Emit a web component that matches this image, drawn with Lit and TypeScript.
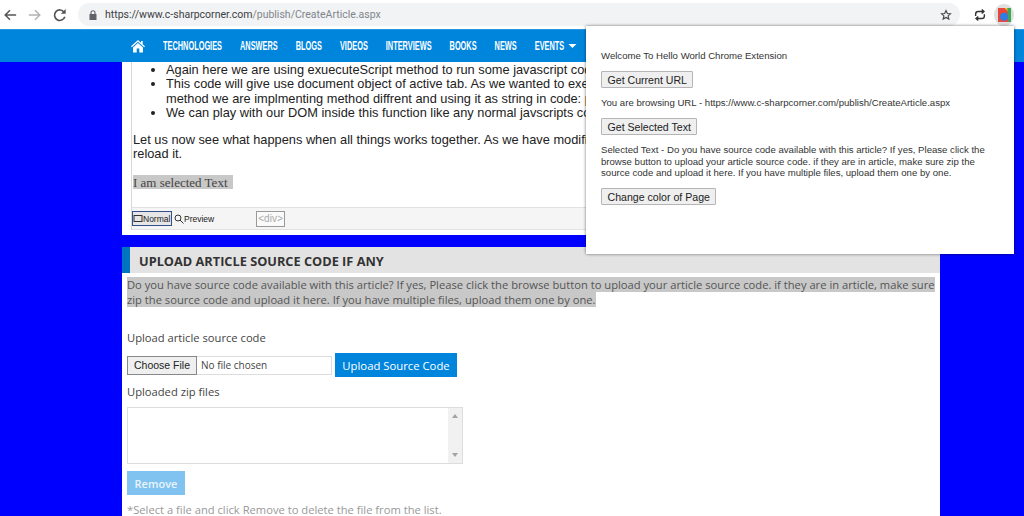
import { LitElement, html, css } from "lit";
import { customElement } from "lit/decorators.js";

@customElement("app-root")
export class AppRoot extends LitElement {
  static styles = css`
    :host { display: block; position: relative; width: 1024px; height: 516px; overflow: hidden; background: #0000ff; font-family: "Open Sans", sans-serif; color: #333; }
    .toolbar { height: 29px; background: #fff; display: flex; align-items: center; box-sizing: border-box; padding: 0 0 0 3px; }
    .tool { width: 14px; height: 14px; display: block; flex: none; }
    .back { margin-right: 11px; }
    .fwd { margin-right: 11px; }
    .omni { margin-left: 11px; width: 882px; height: 23px; flex: none; background: #f1f3f4; border-radius: 12px; display: flex; align-items: center; box-sizing: border-box; padding: 0 7px 0 11px; font: 10.5px "Roboto", "Liberation Sans", sans-serif; color: #80868b; }
    .omni b { font-weight: 400; color: #3c4043; }
    .lock { width: 8px; height: 10px; margin-right: 8px; flex: none; }
    .url { flex: 1; }
    .star { width: 12px; height: 12px; margin-right: 1px; }
    .sync { margin-left: 13px; }
    .ext { margin-left: 7px; width: 20px; height: 22px; border-radius: 50%; background: #dedfe0; display: flex; align-items: center; justify-content: center; flex: none; }
    .nav { height: 33px; background: #0085dd; border-top: 1px solid #2b95e0; box-sizing: border-box; display: flex; align-items: center; padding-left: 131px; color: #fff; font: 700 12.5px "Liberation Sans", sans-serif; }
    .home { width: 14px; height: 14px; margin-right: 18px; flex: none; }
    .items { display: flex; gap: 30.5px; transform: scaleX(.59); transform-origin: left center; white-space: nowrap; }
    .caret { display: inline-block; border: 4px solid transparent; border-top-color: #fff; border-bottom: 0; margin: 0 0 2px 10px; transform: scaleX(1.7); }
    .main { width: 818px; margin-left: 122px; display: flex; flex-direction: column; }
    .editor { height: 173px; background: #fff; padding: 0 0 5px 9px; box-sizing: border-box; display: flex; flex-direction: column; }
    .frame { flex: 1; border-left: 1px solid #d8d8d8; font: 12.8px/14.4px "Liberation Sans", sans-serif; color: #222; overflow: hidden; display: flex; flex-direction: column; }
    .doc { flex: 1; padding-left: 1px; min-height: 0; }
    ul { margin: 0 0 12px; padding-left: 33px; white-space: nowrap; padding-top: 1px; }
    p { margin: 0; }
    .lead { white-space: nowrap; }
    .sel { margin-top: 14px; background: #c8c8c8; width: 100px; height: 14px; font: 13px/15px "Liberation Serif", serif; color: #444; white-space: nowrap; }
    .etools { height: 23px; background: #f5f5f5; border-top: 1px solid #e2e2e2; border-bottom: 1px solid #e2e2e2; box-sizing: border-box; display: flex; align-items: center; font: 8.5px "Liberation Sans", sans-serif; color: #222; }
    .mode { display: flex; align-items: center; height: 15px; box-sizing: border-box; }
    .normal { border: 1px solid #33508a; background: #e6e6e6; width: 40px; margin-right: 2px; }
    .preview { width: 82px; }
    .mode svg { width: 10px; height: 10px; flex: none; }
    .tag { border: 1px solid #999; height: 16px; width: 29px; box-sizing: border-box; color: #aaa; display: flex; align-items: center; justify-content: center; background: #fafafa; font-size: 10px; }
    .gap { height: 12px; }
    .section { background: #fff; flex: 1; padding-bottom: 40px; }
    h2 { margin: 0; height: 26px; background: #e3e3e3; border-left: 8px solid #0075bf; box-sizing: border-box; padding-left: 9px; font: 700 12.75px/28px "Open Sans", sans-serif; color: #333; }
    .body { padding: 4px 5px 0; font-size: 11.2px; line-height: 15px; }
    .hl { background: #c8c8c8; color: #555; }
    .label { margin: 0; font-size: 11.2px; line-height: 16px; color: #444; }
    .up { margin-top: 23px; }
    .filerow { display: flex; align-items: center; margin-top: 7px; height: 24px; }
    .file { width: 205px; height: 19px; box-sizing: border-box; border: 1px solid #ddd; display: flex; align-items: center; background: #fff; font-size: 10px; color: #444; }
    .file button { width: 70px; height: 19px; margin: -1px 4px -1px -1px; padding: 0; background: #efefef; border: 1px solid #888; font: 10.5px "Liberation Sans", sans-serif; color: #222; flex: none; }
    .blue { background: #0085dd; color: #fff; border: 0; padding: 0; font: 400 11.3px "Open Sans", sans-serif; height: 24px; }
    .blue.w { width: 122px; margin-left: 3px; }
    .zip { margin-top: 7px; }
    .list { margin-top: 7px; width: 336px; height: 57px; box-sizing: border-box; border: 1px solid #ddd; display: flex; justify-content: flex-end; background: #fff; }
    .bar { width: 14px; background: #f1f1f1; display: flex; flex-direction: column; justify-content: space-between; align-items: center; padding: 6px 0; box-sizing: border-box; }
    .up-a, .dn-a { border: 3px solid transparent; }
    .up-a { border-bottom: 4px solid #a3a3a3; border-top: 0; }
    .dn-a { border-top: 4px solid #a3a3a3; border-bottom: 0; }
    .rm { margin-top: 7px; display: block; width: 58px; background: #80c2f0; font-weight: 600; font-size: 11px; color: #e8f4fc; }
    .note { margin: 7px 0 0; font-size: 11.2px; line-height: 16px; color: #999; white-space: nowrap; }
    .popup { position: absolute; left: 586px; top: 26px; width: 428px; height: 228px; box-sizing: border-box; background: #fff; box-shadow: 0 0 3px rgba(0,0,0,.55); padding: 24px 15px 0; font: 9.6px/11.5px "Liberation Sans", sans-serif; color: #333; }
    .popup p { margin: 0; }
    .popup button { display: block; height: 17px; margin: 9.5px 0 9px; padding: 0 5.5px; background: #efefef; border: 1px solid #b5b5b5; border-radius: 1px; font: 10.6px "Liberation Sans", sans-serif; color: #222; }
  `;

  render() {
    return html`
      <div class="toolbar">
        <svg class="tool back" viewBox="0 0 16 16" fill="none" stroke="#555" stroke-width="1.7"><path d="M15 8H2.5M8 2.5 2.5 8 8 13.5"/></svg>
        <svg class="tool fwd" viewBox="0 0 16 16" fill="none" stroke="#b3b3b3" stroke-width="1.7"><path d="M1 8h12.500M8 2.500 13.500 8 8 13.500"/></svg>
        <svg class="tool" viewBox="0 0 16 16" fill="none" stroke="#555" stroke-width="1.9"><path d="M13.500 10a6 6 0 1 1-.8-5.200"/><path d="M14.500 1v5.500H9z" fill="#555" stroke="none"/></svg>
        <div class="omni">
          <svg class="lock" viewBox="0 0 8 10"><rect x="0.5" y="4" width="7" height="6" fill="#5f6368"/><path d="M2 4.500V2.800a2 2 0 0 1 4 0V4.500" fill="none" stroke="#5f6368" stroke-width="1.1"/></svg>
          <span class="url"><b>https://www.c-sharpcorner.com</b>/publish/CreateArticle.aspx</span>
          <svg class="tool star" viewBox="0 0 16 16" fill="none" stroke="#444" stroke-width="1.5"><path d="M8 2l1.800 4 4.200.4-3.200 2.800 1 4.200L8 11.200l-3.800 2.200 1-4.200L2 6.400 6.200 6z"/></svg>
        </div>
        <svg class="tool sync" viewBox="0 0 16 16" fill="none" stroke="#333" stroke-width="1.6"><path d="M3 9V7a3 3 0 0 1 3-3h6M10 1.800 12.500 4 10 6.200M13 7v2a3 3 0 0 1-3 3H4M6 9.800 3.500 12 6 14.200"/></svg>
        <div class="ext">
          <svg width="13" height="14" viewBox="0 0 14 15"><rect width="14" height="15" fill="#e8453c"/><path d="M7 0h7v7z" fill="#f7c52b"/><path d="M10 0h4v15h-3z" fill="#3aa757"/><circle cx="6.500" cy="9.500" r="4.300" fill="#2f7de1"/></svg>
        </div>
      </div>
      <div class="nav">
        <svg class="home" viewBox="0 0 14 14" fill="#fff"><path d="M7 1 0 7.300l.8.900L7 2.700l6.200 5.500.8-.9-2.300-2.100V2H10v1.800zM2 8.500V13.500h3.700V9.500h2.600v4H12V8.500L7 4z"/></svg>
        <div class="items"><span>TECHNOLOGIES</span><span>ANSWERS</span><span>BLOGS</span><span>VIDEOS</span><span>INTERVIEWS</span><span>BOOKS</span><span>NEWS</span><span>EVENTS<i class="caret"></i></span></div>
      </div>
      <div class="main">
        <div class="editor">
          <div class="frame">
            <div class="doc">
              <ul>
                <li>Again here we are using exuecuteScript method to run some javascript code</li>
                <li>This code will give use document object of active tab. As we wanted to execute<br />method we are implmenting method diffrent and using it as string in code: pass</li>
                <li>We can play with our DOM inside this function like any normal javscripts code</li>
              </ul>
              <p class="lead">Let us now see what happens when all things works together. As we have modified<br />reload it.</p>
              <div class="sel">I am selected Text</div>
            </div>
            <div class="etools">
              <div class="mode normal"><svg viewBox="0 0 10 10" fill="none" stroke="#333"><rect x="1" y="1.5" width="8" height="6"/></svg>Normal</div>
              <div class="mode preview"><svg viewBox="0 0 10 10" fill="none" stroke="#333"><circle cx="4" cy="4" r="3"/><path d="M6 6l3.500 3.500"/></svg>Preview</div>
              <div class="tag">&lt;div&gt;</div>
            </div>
          </div>
        </div>
        <div class="gap"></div>
        <div class="section">
          <h2>UPLOAD ARTICLE SOURCE CODE IF ANY</h2>
          <div class="body">
            <span class="hl">Do you have source code available with this article? If yes, Please click the browse button to upload your article source code. if they are in article, make sure zip the source code and upload it here. If you have multiple files, upload them one by one.</span>
            <p class="label up">Upload article source code</p>
            <div class="filerow">
              <div class="file"><button>Choose File</button>No file chosen</div>
              <button class="blue w">Upload Source Code</button>
            </div>
            <p class="label zip">Uploaded zip files</p>
            <div class="list"><div class="bar"><i class="up-a"></i><i class="dn-a"></i></div></div>
            <button class="blue rm">Remove</button>
            <p class="note">*Select a file and click Remove to delete the file from the list.</p>
          </div>
        </div>
      </div>
      <div class="popup">
        <p>Welcome To Hello World Chrome Extension</p>
        <button>Get Current URL</button>
        <p>You are browsing URL - https://www.c-sharpcorner.com/publish/CreateArticle.aspx</p>
        <button>Get Selected Text</button>
        <p>Selected Text - Do you have source code available with this article? If yes, Please click the browse button to upload your article source code. if they are in article, make sure zip the source code and upload it here. If you have multiple files, upload them one by one.</p>
        <button>Change color of Page</button>
      </div>
    `;
  }
}
